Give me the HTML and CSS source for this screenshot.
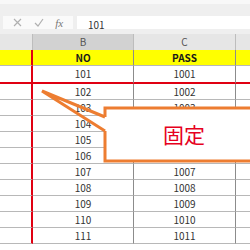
FILE: index.html
```html
<!DOCTYPE html>
<html lang="ja">
<head>
  <meta charset="UTF-8">
  <title>ウィンドウ枠の固定</title>
  <link rel="stylesheet" href="styles.css">
</head>
<body>
  <div class="formula-bar">
    <div class="fx-buttons">
      <svg class="icon" width="9" height="9" viewBox="0 0 9 9"><path d="M1 1L8 8M8 1L1 8" stroke="#b0b0b0" stroke-width="1.2" fill="none"/></svg>
      <svg class="icon" width="10" height="9" viewBox="0 0 10 9"><path d="M1 5L4 8L9 1" stroke="#b0b0b0" stroke-width="1.2" fill="none"/></svg>
      <span class="fx">fx</span>
    </div>
    <div class="formula-input">101</div>
  </div>

  <div class="sheet">
    <div class="col-head"></div>
    <div class="col-head selected">B</div>
    <div class="col-head">C</div>
    <div class="col-head last"></div>

    <div class="cell a title"></div>
    <div class="cell title">NO</div>
    <div class="cell title">PASS</div>
    <div class="cell d title"></div>

    <div class="cell a frozen"></div>
    <div class="cell frozen">101</div>
    <div class="cell frozen">1001</div>
    <div class="cell d frozen"></div>

    <div class="cell a"></div><div class="cell">102</div><div class="cell">1002</div><div class="cell d"></div>
    <div class="cell a"></div><div class="cell">103</div><div class="cell">1003</div><div class="cell d"></div>
    <!-- C104..C106 sit under the callout box -->
    <div class="cell a"></div><div class="cell">104</div><div class="cell"></div><div class="cell d"></div>
    <div class="cell a"></div><div class="cell">105</div><div class="cell"></div><div class="cell d"></div>
    <div class="cell a"></div><div class="cell">106</div><div class="cell"></div><div class="cell d"></div>
    <div class="cell a"></div><div class="cell">107</div><div class="cell">1007</div><div class="cell d"></div>
    <div class="cell a"></div><div class="cell">108</div><div class="cell">1008</div><div class="cell d"></div>
    <div class="cell a"></div><div class="cell">109</div><div class="cell">1009</div><div class="cell d"></div>
    <div class="cell a"></div><div class="cell">110</div><div class="cell">1010</div><div class="cell d"></div>
    <div class="cell a"></div><div class="cell">111</div><div class="cell">1011</div><div class="cell d"></div>
  </div>

  <!-- callout over the grid -->
  <svg class="callout" width="250" height="250" viewBox="0 0 250 250">
    <rect x="105" y="108" width="160" height="53" fill="#fff"/>
    <path d="M105 117L42 91L105 131M105 117L105 108L265 108M265 161L105 161L105 131" stroke="#ed7d31" stroke-width="3" fill="none" stroke-linejoin="miter"/>
    <text x="184" y="143" text-anchor="middle" class="callout-text">固定</text>
  </svg>
</body>
</html>
```

FILE: styles.css
```css
body {
  margin: 0;
  width: 250px;
  height: 250px;
  overflow: hidden;
  position: relative;
  background: #fff;
  font-family: "Noto Sans CJK JP", "Liberation Sans", sans-serif;
}
.formula-bar {
  height: 34px;
  box-sizing: border-box;
  padding: 12px 0 5px 3px;
  display: flex;
  gap: 4px;
  background: #efefef;
  border-top: 4px solid #f8f8f8;
}
.fx-buttons {
  width: 70px;
  background: #fafafa;
  display: flex;
  align-items: center;
  justify-content: space-around;
  padding: 0 4px;
  box-sizing: border-box;
}
.fx {
  font-family: "Liberation Serif", serif;
  font-style: italic;
  font-size: 11px;
  color: #777;
}
.formula-input {
  flex: 1;
  background: #fff;
  font-size: 10px;
  color: #333;
  line-height: 17px;
  padding-left: 11px;
}
.sheet {
  display: grid;
  grid-template-columns: 33px 101px 102px 1fr;
}
.col-head {
  height: 16px;
  box-sizing: border-box;
  background: #e6e6e6;
  border-right: 1px solid #bdbdbd;
  font-size: 10px;
  line-height: 16px;
  color: #555;
  text-align: center;
}
.col-head.selected {
  background: #d2d2d2;
}
.col-head.last {
  border-right: none;
}
.cell {
  height: 16px;
  box-sizing: border-box;
  border-right: 1px solid #8c8c8c;
  border-bottom: 1px solid #b8b8b8;
  font-size: 10px;
  line-height: 15px;
  color: #333;
  text-align: center;
}
.cell.a {
  border-right: 2px solid #e00012;
}
.cell.d {
  border-right: none;
}
.cell.title {
  background: #ffff00;
  font-weight: bold;
  color: #1a1a1a;
}
.cell.frozen {
  height: 18px;
  border-bottom: 2px solid #e00012;
}
.callout {
  position: absolute;
  top: 0;
  left: 0;
  pointer-events: none;
}
.callout-text {
  font-family: "Noto Sans CJK JP", sans-serif;
  font-size: 21px;
  fill: #e60020;
}
```
